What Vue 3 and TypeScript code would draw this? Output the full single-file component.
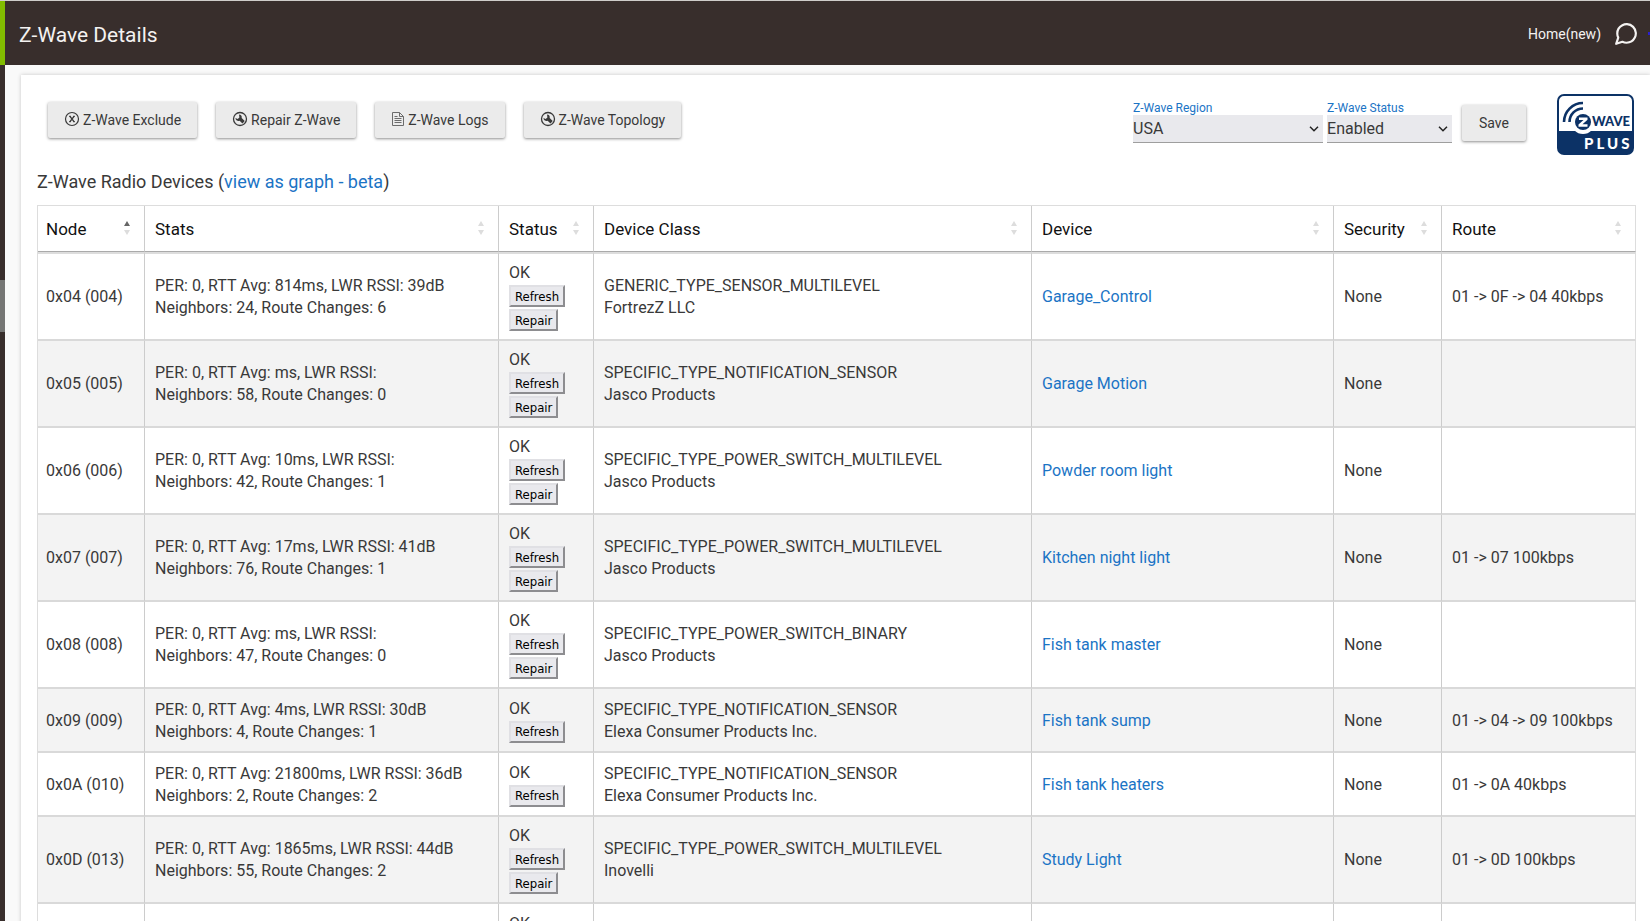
<script setup lang="ts">
import { ref } from 'vue'

interface Row {
  node: string
  stats: string[]
  repair: boolean
  cls: string
  maker: string
  device: string
  route: string
}

const region = ref('USA')
const status = ref('Enabled')

const columns = ['Node', 'Stats', 'Status', 'Device Class', 'Device', 'Security', 'Route']

const row = (node: string, avg: string, rssi: string, neighbors: number, changes: number, repair: boolean, cls: string, maker: string, device: string, route: string): Row => ({
  node,
  stats: [`PER: 0, RTT Avg: ${avg}ms, LWR RSSI: ${rssi}`, `Neighbors: ${neighbors}, Route Changes: ${changes}`],
  repair, cls, maker, device, route,
})

const rows: Row[] = [
  row('0x04 (004)', '814', '39dB', 24, 6, true, 'GENERIC_TYPE_SENSOR_MULTILEVEL', 'FortrezZ LLC', 'Garage_Control', '01 -> 0F -> 04 40kbps'),
  row('0x05 (005)', '', '', 58, 0, true, 'SPECIFIC_TYPE_NOTIFICATION_SENSOR', 'Jasco Products', 'Garage Motion', ''),
  row('0x06 (006)', '10', '', 42, 1, true, 'SPECIFIC_TYPE_POWER_SWITCH_MULTILEVEL', 'Jasco Products', 'Powder room light', ''),
  row('0x07 (007)', '17', '41dB', 76, 1, true, 'SPECIFIC_TYPE_POWER_SWITCH_MULTILEVEL', 'Jasco Products', 'Kitchen night light', '01 -> 07 100kbps'),
  row('0x08 (008)', '', '', 47, 0, true, 'SPECIFIC_TYPE_POWER_SWITCH_BINARY', 'Jasco Products', 'Fish tank master', ''),
  row('0x09 (009)', '4', '30dB', 4, 1, false, 'SPECIFIC_TYPE_NOTIFICATION_SENSOR', 'Elexa Consumer Products Inc.', 'Fish tank sump', '01 -> 04 -> 09 100kbps'),
  row('0x0A (010)', '21800', '36dB', 2, 2, false, 'SPECIFIC_TYPE_NOTIFICATION_SENSOR', 'Elexa Consumer Products Inc.', 'Fish tank heaters', '01 -> 0A 40kbps'),
  row('0x0D (013)', '1865', '44dB', 55, 2, true, 'SPECIFIC_TYPE_POWER_SWITCH_MULTILEVEL', 'Inovelli', 'Study Light', '01 -> 0D 100kbps'),
]
</script>

<template>
  <div class="shell">
    <aside class="rail">
      <div class="rail-top"></div>
      <div class="rail-thumb"></div>
    </aside>
    <div class="page">
      <header class="topbar">
        <h1>Z-Wave Details</h1>
        <nav>
          <a href="#">Home(new)</a>
          <button class="chat" type="button" aria-label="Messages">
            <svg viewBox="1 1 22 22" width="24" height="24" fill="none" stroke="currentColor" stroke-width="2" stroke-linecap="round" stroke-linejoin="round">
              <path d="M21 11.5a8.4 8.4 0 0 1-.9 3.8 8.5 8.5 0 0 1-7.6 4.7 8.4 8.4 0 0 1-3.8-.9L3 21l1.9-5.7a8.4 8.4 0 0 1-.9-3.8 8.5 8.5 0 0 1 4.7-7.6 8.4 8.4 0 0 1 3.8-.9h.5a8.5 8.5 0 0 1 8 8z" />
            </svg>
          </button>
        </nav>
        <span class="dot"></span>
      </header>

      <main class="card">
        <div class="toolbar">
          <div class="actions">
            <button class="btn" type="button">
              <svg class="ico" viewBox="0 0 16 16" fill="none" stroke="currentColor"><circle cx="8" cy="8" r="6.5" stroke-width="1.2" /><path d="M6 5.4l4 5.200M10 5.400l-4 5.200" stroke-width="1.400" /><path d="M5 5.300h2M9 5.300h2M5 10.700h2M9 10.700h2" stroke-width="1" /></svg>
              Z-Wave Exclude
            </button>
            <button class="btn" type="button">
              <svg class="ico" viewBox="0 0 16 16"><circle cx="8" cy="8" r="6.5" fill="none" stroke="currentColor" stroke-width="1.3" /><path d="M7 3.600a3 3 0 0 1 2.700 3.400l3 3-2.200 2.400-2.900-2.700a3 3 0 0 1-4.200-2.600l2.300.8 1.700-1.500z" fill="currentColor" /></svg>
              Repair Z-Wave
            </button>
            <button class="btn" type="button">
              <svg class="ico doc" viewBox="1 0 14 16" fill="none" stroke="#6c6c6c" stroke-width="1"><path d="M2.500 1.500h7l4 4v9h-11zM9.500 1.500v4h4M4.500 5.500h3M4.500 7.500h7M4.500 9.500h7M4.500 11.500h7" /></svg>
              Z-Wave Logs
            </button>
            <button class="btn" type="button">
              <svg class="ico" viewBox="0 0 16 16"><circle cx="8" cy="8" r="6.5" fill="none" stroke="currentColor" stroke-width="1.3" /><path d="M7 3.600a3 3 0 0 1 2.700 3.400l3 3-2.200 2.400-2.900-2.700a3 3 0 0 1-4.200-2.600l2.300.8 1.700-1.500z" fill="currentColor" /></svg>
              Z-Wave Topology
            </button>
          </div>
          <div class="settings">
            <div class="field region">
              <label for="region">Z-Wave Region</label>
              <div class="select">
                <select id="region" v-model="region"><option>USA</option><option>Europe</option></select>
                <svg viewBox="0 0 10 6" width="10" height="6" fill="none" stroke="#222" stroke-width="1.5"><path d="M1 .8l4 4 4-4" /></svg>
              </div>
            </div>
            <div class="field status">
              <label for="status">Z-Wave Status</label>
              <div class="select">
                <select id="status" v-model="status"><option>Enabled</option><option>Disabled</option></select>
                <svg viewBox="0 0 10 6" width="10" height="6" fill="none" stroke="#222" stroke-width="1.5"><path d="M1 .8l4 4 4-4" /></svg>
              </div>
            </div>
            <button class="btn save" type="button">Save</button>
          </div>
          <svg class="logo" viewBox="0 0 77 61" role="img" aria-label="Z-Wave Plus">
            <rect x="1" y="1" width="75" height="59" rx="6" fill="#fff" stroke="#0c3266" stroke-width="2" />
            <path d="M1 37h75v17a6 6 0 0 1-6 6H7a6 6 0 0 1-6-6z" fill="#0c3266" />
            <circle cx="26" cy="28" r="12" fill="#fff" />
            <g fill="none" stroke="#0c3266" stroke-width="2.6">
              <path d="M7 28A19 19 0 0 1 26 9" />
              <path d="M12.500 28A13.500 13.500 0 0 1 26 14.500" />
            </g>
            <circle cx="26" cy="28" r="8" fill="#0c3266" />
            <path d="M22 23.500h8.500v2.200L25.500 30.300h5v2.500h-9v-2.200l5-4.600h-4.500z" fill="#fff" />
            <text x="35" y="32" font-size="13">WAVE</text>
            <text class="plus" x="27" y="55" font-size="15">PLUS</text>
          </svg>
        </div>

        <h2>Z-Wave Radio Devices (<a href="#">view as graph - beta</a>)</h2>

        <table>
          <colgroup>
            <col class="c-node" /><col class="c-stats" /><col class="c-status" /><col class="c-class" /><col class="c-device" /><col class="c-sec" /><col class="c-route" />
          </colgroup>
          <thead>
            <tr>
              <th v-for="(c, i) in columns" :key="c" scope="col">
                <div class="th">
                  <span>{{ c }}</span>
                  <svg class="sort" :class="{ asc: i === 0 }" viewBox="0 0 6 14" width="6" height="14"><path class="up" d="M3 0l3 5H0z" /><path d="M3 14l3-5H0z" /></svg>
                </div>
              </th>
            </tr>
          </thead>
          <tbody>
            <tr v-for="r in rows" :key="r.node">
              <td>{{ r.node }}</td>
              <td><div v-for="s in r.stats" :key="s">{{ s }}</div></td>
              <td class="state">
                <div>OK</div>
                <div class="mini-row"><button class="mini" type="button">Refresh</button></div>
                <div v-if="r.repair" class="mini-row"><button class="mini" type="button">Repair</button></div>
              </td>
              <td>{{ r.cls }}<br />{{ r.maker }}</td>
              <td><a href="#">{{ r.device }}</a></td>
              <td>None</td>
              <td>{{ r.route }}</td>
            </tr>
            <tr>
              <td></td><td></td>
              <td class="state">
                <div>OK</div>
                <div class="mini-row"><button class="mini" type="button">Refresh</button></div>
              </td>
              <td></td><td></td><td></td><td></td>
            </tr>
          </tbody>
        </table>
      </main>
    </div>
  </div>
</template>

<style>
html, body { margin: 0; height: 100%; overflow: hidden; }
#app { height: 100%; }
</style>

<style scoped>
* { box-sizing: border-box; }
.shell {
  display: flex;
  height: 100%;
  overflow: hidden;
  background: #f9f9f9;
  border-top: 1px solid #cfcdca;
  font-family: Roboto, "Liberation Sans", sans-serif;
  font-size: 16px;
  line-height: 22px;
  color: #393939;
}
.rail { flex: 0 0 5px; background: #382e2c; display: flex; flex-direction: column; }
.rail-top { height: 64px; background: #81bc00; }
.rail-thumb { height: 52px; margin-top: 215px; background: #757674; }
.page { flex: 1; min-width: 0; }
.topbar {
  height: 64px;
  background: #382e2c;
  color: #f4f2f1;
  display: flex;
  align-items: center;
  justify-content: space-between;
  padding: 0 12px 0 14px;
  position: relative;
}
h1 { margin: 0; font-size: 21px; line-height: 28px; font-weight: 400; padding-top: 4px; }
nav { display: flex; align-items: center; gap: 13px; font-size: 14px; padding-top: 1px; }
nav a { color: #f4f2f1; }
.chat { border: 0; background: none; padding: 0; color: #f4f2f1; display: flex; }
.dot { position: absolute; right: 0; top: 31px; width: 2px; height: 3px; background: #2a1fd0; }
a { color: #1b74c5; text-decoration: none; }
.card {
  margin: 10px 0 0 16px;
  padding: 19px 14px 0 16px;
  background: #fff;
  box-shadow: 0 0 4px rgba(0, 0, 0, .2);
}
.toolbar { display: flex; align-items: flex-start; }
.actions { display: flex; gap: 19px; padding: 8px 0 0 11px; }
.btn {
  height: 36px;
  padding: 0 16px;
  border: 0;
  border-radius: 2px;
  background: #ebebeb;
  box-shadow: 0 1px 3px rgba(0, 0, 0, .45);
  color: #393939;
  font: 14px/20px Roboto, sans-serif;
  display: flex;
  align-items: center;
  gap: 3px;
  white-space: nowrap;
}
.ico { width: 16px; height: 16px; margin-top: -2px; }
.doc { width: 14px; }
.settings { margin-left: auto; display: flex; align-items: flex-start; gap: 4px; }
.field { display: flex; flex-direction: column; padding-top: 8px; }
.field label { font-size: 12px; line-height: 13px; color: #1b74c5; }
.region { width: 190px; }
.status { width: 125px; }
.select { position: relative; }
.select svg { position: absolute; right: 4px; top: 11px; pointer-events: none; }
select {
  appearance: none;
  display: block;
  width: 100%;
  height: 28px;
  padding: 0;
  border: 0;
  border-bottom: 1px solid #9e9e9e;
  border-radius: 0;
  background: #e9e9ed;
  color: #393939;
  font: 16px/22px Roboto, sans-serif;
}
.save { margin: 11px 0 0 6px; padding: 0 17px; }
.logo { width: 77px; height: 61px; margin: 0 2px 1px 31px; }
.logo text { font-family: Lato, sans-serif; font-weight: 900; fill: #0c3266; }
.logo .plus { fill: #fff; letter-spacing: 3px; }
h2 { margin: 14px 0 11px; font-size: 18px; line-height: 24px; font-weight: 400; }
table { width: 100%; table-layout: fixed; border-collapse: separate; border-spacing: 0; border-top: 1px solid #ddd; border-left: 1px solid #ddd; }
.c-node { width: 107px; }
.c-stats { width: 354px; }
.c-status { width: 95px; }
.c-class { width: 438px; }
.c-device { width: 302px; }
.c-sec { width: 108px; }
.c-route { width: 194px; }
th { height: 46px; padding: 0 14px 0 10px; font-size: 17px; font-weight: 400; text-align: left; color: #111; border-right: 1px solid #ccc; border-bottom: 1px solid #aaa; }
th:first-child, td:first-child { padding-left: 8px; }
.th { display: flex; align-items: center; justify-content: space-between; }
.sort { fill: #ddd; margin-top: -2px; }
.sort.asc .up { fill: #666; }
td { height: 64px; padding: 8px 10px 7px; vertical-align: middle; border-right: 1px solid #ccc; border-bottom: 2px solid #d9d9d9; white-space: nowrap; }
tbody tr:first-child td { border-top: 2px solid #ddd; }
th:last-child, td:last-child { border-right-color: #ddd; }
tbody tr:nth-child(even) { background: #f3f3f3; }
.mini-row { height: 24px; display: flex; align-items: center; }
.mini {
  height: 22px;
  padding: 0 4px;
  border: 2px outset #e0e0e4;
  background: #e9e9ed;
  color: #000;
  font: 13px/17px "DejaVu Sans Condensed", "DejaVu Sans", sans-serif;
}
</style>
